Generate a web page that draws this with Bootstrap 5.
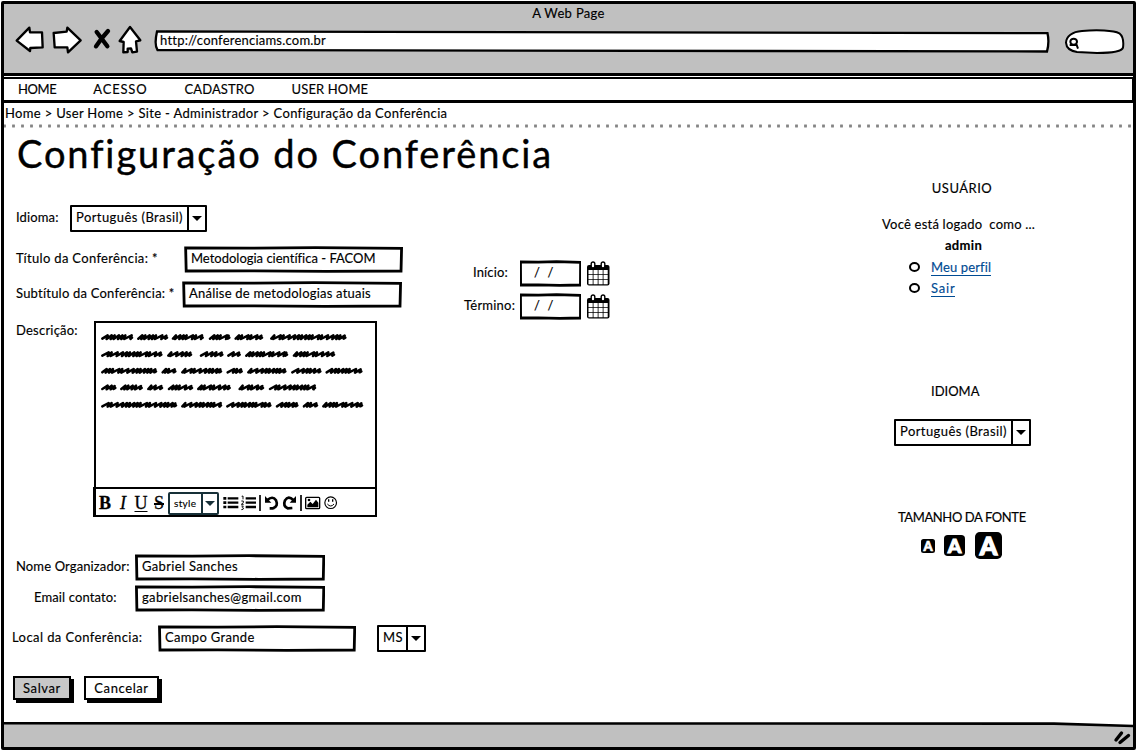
<!DOCTYPE html>
<html lang="pt-BR">
<head>
<meta charset="utf-8">
<title>Configuração do Conferência</title>
<link href="https://cdn.jsdelivr.net/npm/bootstrap@5.3.0/dist/css/bootstrap.min.css" rel="stylesheet">
<style>
body{font-family:"Lato",sans-serif;font-size:13px;line-height:18px;color:#000;background:#fff;letter-spacing:.33px;width:1137px;height:751px;overflow:hidden;-webkit-text-stroke:.15px}
span,a,h1,button{white-space:pre}
svg{display:block;flex:none}
.ls-n{letter-spacing:-.4px}.ls-0{letter-spacing:0}.ls-1{letter-spacing:.13px}.ls-2{letter-spacing:.22px}.ls-4{letter-spacing:.42px}.ls-9{letter-spacing:.8px}
.frame{height:749px;width:1135px;border:3px solid #000;border-radius:2px;margin:1px}
.topbar{height:72px;background:#c0c0c0;border-bottom:3px solid #000}
.page-title{height:22px;line-height:19px}
.tools{height:32px;padding-left:11px}
.url{width:896px;height:23px;margin:0 0 1px 11px;padding:0 0 0 6px;line-height:20px;background:url("data:image/svg+xml,%3Csvg xmlns='http://www.w3.org/2000/svg' viewBox='0 0 896 23'%3E%3Cpath d='M3 1.5L893.5 3.2Q895.5 12 893 21.5L3.5 20Q0 15 3 1.5Z' fill='white' stroke='black' stroke-width='2.3'/%3E%3C/svg%3E") no-repeat}
.menu{height:26px;border:2px solid #000;border-width:2px 1px 3px 0;margin-top:1px}
.menu .nav-link{padding:0 0 1px;color:#000;margin-left:37px}
.menu .nav-link:first-child{margin-left:14px}
.trail{height:21px;padding-left:1px;line-height:20px}
.dots{height:5px;background:radial-gradient(circle,#858585 1.3px,transparent 2px) -4px -.5px/9px 5px repeat-x}
.content{height:593px}
h1{font-size:38px;line-height:46px;font-weight:400;margin:1px 0 29px 13px;letter-spacing:1.9px;-webkit-text-stroke:.4px #000}
.sk{background:url("data:image/svg+xml,%3Csvg xmlns='http://www.w3.org/2000/svg' viewBox='0 0 200 27' preserveAspectRatio='none'%3E%3Cpath d='M1.5 1.8L60 2.1L120 1.7L198.7 2.4L198.2 25L130 25.3L60 24.8L2 25Z' fill='white' stroke='black' stroke-width='2.8' vector-effect='non-scaling-stroke'/%3E%3C/svg%3E") no-repeat;background-size:100% 100%}
.field{height:27px;padding:0 0 3px 7px;display:flex;align-items:center;flex:none}
.pick{height:27px;border:2px solid #000;border-radius:1px;display:flex;background:#fff}
.pick span{padding:2px 0 0 4px;flex:1;line-height:17px}
.pick i{width:18px;border-left:2px solid #000;display:flex;align-items:center;justify-content:center}
.pick i:before,.mini i:before{content:"";border:5px solid transparent;border-top:5.5px solid #000;border-bottom:0}
.w-pick{width:137px}.w-uf{width:49px;margin-left:21px}.w-date{width:61px}
.rowx{display:flex;height:27px;padding-left:12px}
.rowx .lab{padding-top:3px;flex:none}
.top-area{height:75px;margin-top:14px}
.titles{width:456px}
.editor{width:283px;height:196px;border:2.5px solid #000}
.bar{height:30px;margin:1px -2px 0 -3px;border-top:2.5px solid #000;border-left:2px solid #000;padding-left:1px}
.bar b,.bar em,.bar u,.bar s{font:18px/20px "Liberation Serif",serif;letter-spacing:0;text-align:center;width:18px;-webkit-text-stroke:.3px}
.bar b{font-weight:700}.bar em{font-style:italic}.bar s{text-decoration-thickness:2px}.bar u{text-decoration-thickness:1px;text-underline-offset:2px}
.mini{width:51px;height:23px;border:2px solid #173038;border-radius:2px;font-size:10px;display:flex;line-height:19px}
.mini span{width:31px;padding-left:4px}
.mini i{flex:1;border-left:2px solid #173038;display:flex;align-items:center;justify-content:center}
.mini i:before{border-top-color:#173038}
.act{height:24px;border:2.5px solid #000;background:#fff;box-shadow:3px 3px 0 #000;padding:0;line-height:17px;letter-spacing:.6px;color:#000}
.save{width:58px;background:#c8c8c8}.cancel{width:75px;margin-left:13px}
.side{width:160px;margin-right:91px;padding-top:50px}
.side a{color:#004b93;text-decoration:none;border-bottom:1px solid #004b93;line-height:16px;height:17px}
.ring{width:11px;height:10px;border:2px solid #000;border-radius:50%;margin:0 11px 0 27px}
.size-a{background:#000;color:#fff;display:flex;align-items:center;justify-content:center;border-radius:18%}
.a-s{width:14px;height:14px}.a-m{width:21px;height:21px;margin:0 10px 0 9px}.a-l{width:27px;height:27px}
.size-a text{font:900 25px "Lato",sans-serif;letter-spacing:0;fill:#fff;stroke:#fff;stroke-width:1.3}
.foot{height:25px;background:url("data:image/svg+xml,%3Csvg xmlns='http://www.w3.org/2000/svg' viewBox='0 0 1129 25'%3E%3Cpath d='M-2 1.3L1050 1.6L1131 4V27H-2Z' fill='%23c0c0c0' stroke='black' stroke-width='2.6'/%3E%3C/svg%3E") no-repeat}
</style>
</head>
<body>
<div class="frame">
<header class="topbar">
<div class="page-title text-center">A Web Page</div>
<div class="tools d-flex align-items-center">
<svg style="margin-bottom:7px" width="128" height="30" viewBox="45 63 384 90" fill="#fff" stroke="#000" stroke-width="7" stroke-linejoin="round" stroke-linecap="round"><path d="M50 113L88 74L90 88L126 88L128 133L91 135L90 144Z"/><path d="M161 90L200 86L202 74L242 112L204 148L202 133L164 133Z"/><path d="M290 87Q303 104 322 130M324 84Q302 108 288 130" stroke-width="13"/><path d="M390 72L421 112L408 115L411 146L397 148L393 136L383 137L383 147L370 148L371 117L359 114Z"/></svg>
<div class="url"><span class="ls-2">http://conferenciams.com.br</span></div>
<svg style="margin:0 0 1px 14px" width="61" height="25" viewBox="851 84 183 75" fill="#fff" stroke="#000" stroke-width="6"><path d="M857 125C858 106 875 92 905 90C950 86 1000 88 1017 97C1028 106 1030 125 1028 140C1024 153 980 156 950 156L890 153C870 150 858 142 857 125Z"/><ellipse cx="880" cy="122" rx="10" ry="9"/><path d="M868 132h21l4 11" /></svg>
</div>
</header>
<nav class="menu nav align-items-center"><a class="nav-link ls-n">HOME</a><a class="nav-link ls-9">ACESSO</a><a class="nav-link ls-1">CADASTRO</a><a class="nav-link ls-1">USER HOME</a></nav>
<div class="trail">Home &gt; User Home &gt; Site - Administrador &gt; Configuração da Conferência</div>
<div class="dots"></div>
<div class="content d-flex justify-content-between">
<main>
<h1>Configuração do Conferência</h1>
<div class="rowx"><span class="lab ls-1" style="width:54px">Idioma:</span><div class="pick w-pick"><span class="ls-4">Português (Brasil)</span><i></i></div></div>
<div class="top-area d-flex">
<div class="titles">
<div class="rowx mb-2"><span class="lab" style="width:168px">Título da Conferência: *</span><div class="field sk ls-0" style="width:219px;font-variant-ligatures:none">Metodologia científica - FACOM</div></div>
<div class="rowx"><span class="lab ls-2" style="width:166px">Subtítulo da Conferência: *</span><div class="field sk ls-2" style="width:220px">Análise de metodologias atuais</div></div>
</div>
<div style="padding-top:14px">
<div class="d-flex" style="height:33px"><span class="ls-1" style="width:60px;padding:3px 0 0 13px">Início:</span><div class="field sk w-date" style="padding-left:14px"><span>/  /</span></div><svg style="margin:1px 0 0 5px" width="24" height="25" viewBox="0 0 24 25"><use href="#cal"/></svg></div>
<div class="d-flex"><span class="ls-2" style="width:60px;padding:3px 0 0 4px">Término:</span><div class="field sk w-date" style="padding-left:14px"><span>/  /</span></div><svg style="margin:1px 0 0 5px" width="24" height="25" viewBox="0 0 24 25"><g id="cal"><rect x="1" y="4" width="22.500" height="20.500" rx="2"/><path d="M2.500 9h4.200v4.200h-4.200zM7.500 9h4.200v4.200h-4.200zM12.500 9h4.200v4.200h-4.200zM17.500 9h4.200v4.200h-4.200zM2.500 14h4.200v4.200h-4.200zM7.500 14h4.200v4.200h-4.200zM12.500 14h4.200v4.200h-4.200zM17.500 14h4.200v4.200h-4.200zM2.500 19h4.200v4.200h-4.200zM7.500 19h4.200v4.200h-4.200zM12.500 19h4.200v4.200h-4.200zM17.500 19h4.200v4.200h-4.200z" fill="#fff"/><rect x="5.200" y="1" width="3.600" height="6" rx="1.800" fill="#fff" stroke="#000" stroke-width="1.400"/><rect x="15.200" y="1" width="3.600" height="6" rx="1.800" fill="#fff" stroke="#000" stroke-width="1.400"/></g></svg></div>
</div>
</div>
<div class="rowx" style="height:196px"><span class="lab ls-2" style="width:78px;padding-top:0">Descrição:</span>
<div class="editor"><svg id="scribble" width="278" height="163" viewBox="49 40 834 489" fill="none" stroke="#000" stroke-width="7.5" stroke-linejoin="round" stroke-linecap="round"></svg>
<div class="bar d-flex align-items-center"><b>B</b><em>I</em><u>U</u><s>S</s><div class="mini"><span>style</span><i></i></div>
<svg width="124" height="24" viewBox="429 62 372 72" style="margin-left:4px" fill="none" stroke="#000"><path d="M443 84h32M443 97h32M443 110h32M497 84h31M497 97h31M497 110h31" stroke-width="7"/><path d="M430 84h9M430 97h9M430 110h9" stroke-width="8"/><path d="M485 78l4-1v10M484 92h6v5l-6 5h7M484 107h6l-3 4q6 1 2 6l-5 1" stroke-width="2.800"/><path d="M540 74v48M663 74v48" stroke-width="5"/><path d="M562 89Q578 75 588 90Q596 108 579 114L569 114M640 89Q625 74 615 90Q608 108 623 114L637 113" stroke-width="8"/><path d="M555 77v20h19zM648 77v20h-19z" fill="#000" stroke="none"/><rect x="677" y="81" width="42" height="34" rx="3" stroke-width="4"/><path d="M682 111V103l9-9 7 7 10-13 7 9v14z" fill="#000" stroke="none"/><circle cx="687" cy="89" r="4" fill="#000" stroke="none"/><circle cx="752" cy="97" r="17.500" stroke-width="3.500"/><path d="M742 101q10 12 20 0" stroke-width="3"/><path d="M746 87v7M758 87v7" stroke-width="4"/></svg></div></div></div>
<div class="rowx" style="margin-top:37px"><span class="lab ls-1" style="width:119px">Nome Organizador:</span><div class="field sk" style="width:190px">Gabriel Sanches</div></div>
<div class="rowx mt-1"><span class="lab ls-1" style="width:119px;padding-left:18px">Email contato:</span><div class="field sk" style="width:190px">gabrielsanches@gmail.com</div></div>
<div class="rowx" style="margin-top:13px;padding-left:8px"><span class="lab ls-4" style="width:146px">Local da Conferência:</span><div class="field sk" style="width:198px">Campo Grande</div><div class="pick w-uf"><span>MS</span><i></i></div></div>
<div class="d-flex" style="margin:24px 0 0 9px"><button class="act save">Salvar</button><button class="act cancel">Cancelar</button></div>
</main>
<aside class="side">
<div class="text-center" style="letter-spacing:.5px">USUÁRIO</div>
<div style="margin-top:18px"><span class="ls-2">Você está logado  como ...</span></div>
<div class="text-center fw-bold" style="margin:3px 0 0 3px">admin</div>
<div class="d-flex align-items-center" style="margin-top:4px;height:18px"><div class="ring"></div><a class="ls-1">Meu perfil</a></div>
<div class="d-flex align-items-center" style="margin-top:3px;height:18px"><div class="ring"></div><a class="ls-9">Sair</a></div>
<div class="ls-0" style="margin:85px 0 19px 49px">IDIOMA</div>
<div class="pick w-pick" style="margin-left:12px"><span class="ls-4">Português (Brasil)</span><i></i></div>
<div class="ls-n" style="margin:62px 0 6px 16px">TAMANHO DA FONTE</div>
<div class="d-flex align-items-center" style="padding-left:39px"><div class="size-a a-s"><svg viewBox="0 0 27 27"><text x="13.500" y="22.500" text-anchor="middle">A</text></svg></div><div class="size-a a-m"><svg viewBox="0 0 27 27"><text x="13.500" y="22.500" text-anchor="middle">A</text></svg></div><div class="size-a a-l"><svg viewBox="0 0 27 27"><text x="13.500" y="22.500" text-anchor="middle">A</text></svg></div></div>
</aside>
</div>
<footer class="foot d-flex justify-content-end"><svg width="18" height="15" viewBox="0 0 18 15" style="margin:8px 2px 0 0" stroke="#000" stroke-width="3.400" stroke-linecap="round"><path d="M3 10l5.500-7M7 12.500l8.500-7"/></svg></footer>
</div>
<script>
// Placeholder text: each pair is the start and end of one scribbled word.
const lines=[[82,[65,160,173,265,277,372,388,452,465,550,572,800]],[133,[65,248,263,337,361,431,443,483,497,625,640,766]],[183,[65,232,246,290,305,427,441,489,503,620,635,725,738,848]],[233,[65,110,122,189,203,250,265,340,353,453,477,553,568,709]],[285,[65,292,305,427,440,575,589,656,670,715,728,850]]];
const steps=[16,9,12,19,9,9,13,18,10];
let d='';
lines.forEach(([y,w],r)=>{for(let i=0;i<w.length;i+=2){let x=w[i]+3,k=0;d+=`M${x} ${y+5}`;while(x<w[i+1]-22){const s=steps[(k*2+i+r*3)%9];x+=s;d+=`L${x} ${y-5}L${x-3} ${y+6}`;k++}d+=`L${w[i+1]-5} ${y-4}L${w[i+1]-8} ${y+5}L${w[i+1]-3} ${y+2}`}});
document.getElementById('scribble').innerHTML=`<path d="${d}"/>`;
</script>
</body>
</html>
